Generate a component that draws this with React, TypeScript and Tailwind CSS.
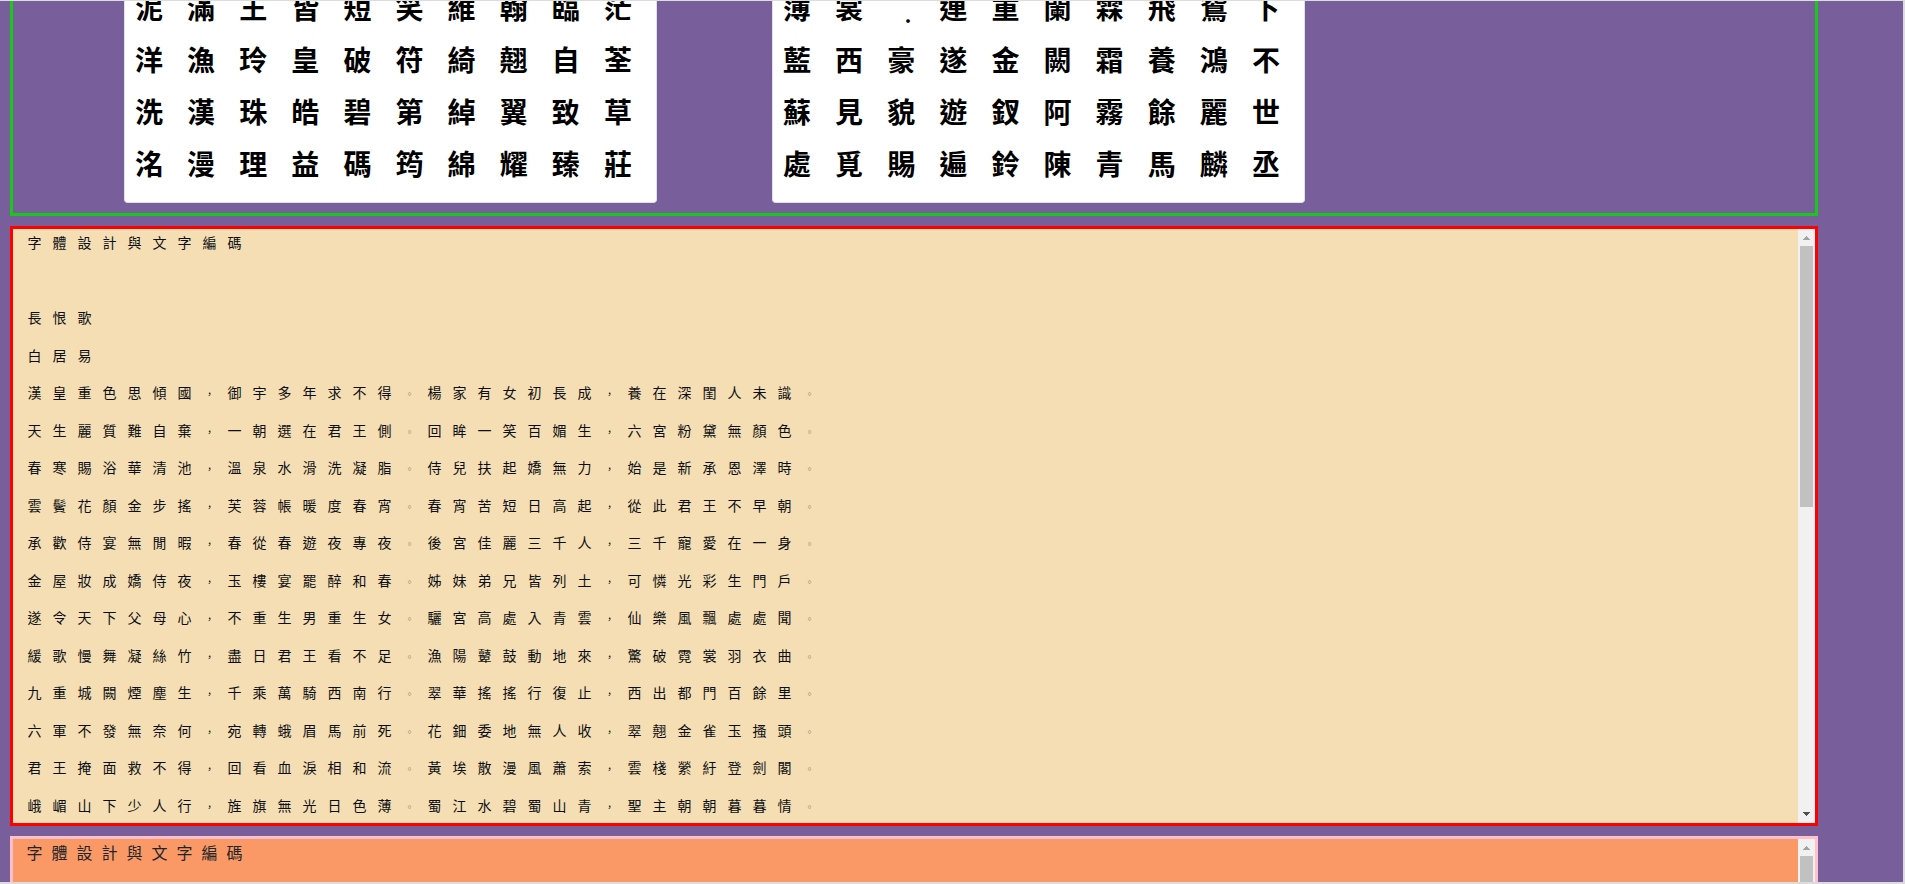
const glyphSheets: string[][] = [
  ["泥滿王皆短笑維翰臨茫", "洋漁玲皇破符綺翹自荃", "洗漢珠皓碧第綽翼致草", "洺漫理益碼筠綿耀臻莊"],
  ["薄裳.連重闌霖飛鴛下", "藍西豪遂金闕霜養鴻不", "蘇見貌遊釵阿霧餘麗世", "處覓賜遍鈴陳青馬麟丞"],
];

const title = "字體設計與文字編碼";

const poem: string[] = [
  title,
  "",
  "長恨歌",
  "白居易",
  "漢皇重色思傾國，御宇多年求不得。楊家有女初長成，養在深閨人未識。",
  "天生麗質難自棄，一朝選在君王側。回眸一笑百媚生，六宮粉黛無顏色。",
  "春寒賜浴華清池，溫泉水滑洗凝脂。侍兒扶起嬌無力，始是新承恩澤時。",
  "雲鬢花顏金步搖，芙蓉帳暖度春宵。春宵苦短日高起，從此君王不早朝。",
  "承歡侍宴無閒暇，春從春遊夜專夜。後宮佳麗三千人，三千寵愛在一身。",
  "金屋妝成嬌侍夜，玉樓宴罷醉和春。姊妹弟兄皆列土，可憐光彩生門戶。",
  "遂令天下父母心，不重生男重生女。驪宮高處入青雲，仙樂風飄處處聞。",
  "緩歌慢舞凝絲竹，盡日君王看不足。漁陽鼙鼓動地來，驚破霓裳羽衣曲。",
  "九重城闕煙塵生，千乘萬騎西南行。翠華搖搖行復止，西出都門百餘里。",
  "六軍不發無奈何，宛轉蛾眉馬前死。花鈿委地無人收，翠翹金雀玉搔頭。",
  "君王掩面救不得，回看血淚相和流。黃埃散漫風蕭索，雲棧縈紆登劍閣。",
  "峨嵋山下少人行，旌旗無光日色薄。蜀江水碧蜀山青，聖主朝朝暮暮情。",
];

const punctuation: Record<string, string> = {
  "，": "text-[10px]",
  "。": "text-[10px] text-[#212529]/50",
};

function GlyphSheet({ rows }: { rows: string[] }) {
  return (
    <div className="-mt-5 w-[533px] shrink-0 rounded-b-sm border border-t-0 border-[#dee2e6] bg-white pb-[13px] pl-[10px]">
      {rows.map((row) => (
        <p key={row} className="grid h-[52px] grid-cols-10 items-center text-[28px] leading-none font-bold text-black">
          {Array.from(row).map((ch, i) => (
            <span key={i} className={ch === "." ? "w-[28px] pt-4 pr-1 text-right text-[20px]" : ""}>
              {ch}
            </span>
          ))}
        </p>
      ))}
    </div>
  );
}

function Line({ text, size }: { text: string; size: string }) {
  return (
    <p className="h-[1.5em] text-[25px] whitespace-nowrap">
      <span className={`block leading-[26px] ${size}`}>
        {Array.from(text).map((ch, i) => (
          <span key={i} className={`inline-block w-[25px] text-center ${punctuation[ch] ?? ""}`}>
            {ch}
          </span>
        ))}
      </span>
    </p>
  );
}

function Scrollbar() {
  return (
    <div aria-hidden="true" className="flex w-[17px] shrink-0 flex-col items-center bg-[#f1f1f1]">
      <svg width="17" height="17" viewBox="0 0 17 17" className="shrink-0" shapeRendering="crispEdges">
        <path d="M8 7h1v1h1v1h1v1h1v1H5v-1h1V9h1V8h1z" fill="#a3a3a3" />
      </svg>
      <div className="h-[261px] w-[13px] shrink-0 bg-[#c1c1c1]" />
      <div className="grow" />
      <svg width="17" height="17" viewBox="0 0 17 17" className="shrink-0" shapeRendering="crispEdges">
        <path d="M5 6h7v1h-1v1h-1v1H9v1H8V9H7V8H6V7H5z" fill="#505050" />
      </svg>
    </div>
  );
}

export default function App() {
  return (
    <div
      lang="zh-Hant"
      className="h-screen overflow-hidden border-t border-r-2 border-b-2 border-[#dcdcdc] bg-[#785f9b] font-['Noto_Sans_CJK_TC',sans-serif] text-[#212529]"
    >
      <main className="ml-[10px] flex w-[95%] flex-col gap-[10px]">
        <section className="flex items-start gap-[115px] border-3 border-t-0 border-[#19c819] pb-[10px] pl-[111px]">
          {glyphSheets.map((rows, i) => (
            <GlyphSheet key={i} rows={rows} />
          ))}
        </section>

        <section className="flex h-[600px] overflow-hidden border-3 border-[#ff0000] bg-[#f5deb3]">
          <div className="min-w-0 grow overflow-hidden pl-[9px] text-[#0c1014]">
            {poem.map((text, i) => (
              <Line key={i} text={text} size="text-[14px]" />
            ))}
          </div>
          <Scrollbar />
        </section>

        <section className="flex h-[600px] overflow-hidden border-3 border-[#ffc0cb] bg-[#fa9966]">
          <h2 className="min-w-0 grow pl-[9px]">
            <Line text={title} size="text-[16px]" />
          </h2>
          <Scrollbar />
        </section>
      </main>
    </div>
  );
}
